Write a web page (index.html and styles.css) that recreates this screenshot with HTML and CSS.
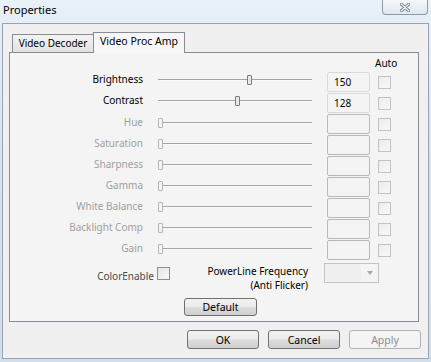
FILE: index.html
```html
<!DOCTYPE html>
<html lang="en">
<head>
    <meta charset="UTF-8">
    <title>Properties</title>
    <link rel="stylesheet" href="styles.css">
</head>
<body>
    <div class="window">
        <div class="titlebar">
            <div class="title">Properties</div>
            <div class="close">
                <svg width="10" height="9" viewBox="0 0 10 9">
                    <path d="M1 1 L9 8 M9 1 L1 8" stroke="#6f7b88" stroke-width="3" stroke-linecap="round"/>
                    <path d="M1 1 L9 8 M9 1 L1 8" stroke="#f4f7fa" stroke-width="1.2" stroke-linecap="round"/>
                </svg>
            </div>
        </div>

        <div class="client">
            <div class="tabstrip">
                <div class="tab">Video Decoder</div>
                <div class="tab active">Video Proc Amp</div>
            </div>

            <div class="panel">
                <div class="auto-head">Auto</div>

                <div class="rows">
                    <div class="label">Brightness</div>
                    <div class="slider"><div class="track"></div><div class="thumb" style="left: 58%"></div></div>
                    <div class="box value">150</div>
                    <div class="check"></div>

                    <div class="label">Contrast</div>
                    <div class="slider"><div class="track"></div><div class="thumb" style="left: 50%"></div></div>
                    <div class="box value">128</div>
                    <div class="check"></div>

                    <div class="label off">Hue</div>
                    <div class="slider off"><div class="track"></div><div class="thumb"></div></div>
                    <div class="box"></div>
                    <div class="check"></div>

                    <div class="label off">Saturation</div>
                    <div class="slider off"><div class="track"></div><div class="thumb"></div></div>
                    <div class="box"></div>
                    <div class="check"></div>

                    <div class="label off">Sharpness</div>
                    <div class="slider off"><div class="track"></div><div class="thumb"></div></div>
                    <div class="box"></div>
                    <div class="check"></div>

                    <div class="label off">Gamma</div>
                    <div class="slider off"><div class="track"></div><div class="thumb"></div></div>
                    <div class="box"></div>
                    <div class="check"></div>

                    <div class="label off">White Balance</div>
                    <div class="slider off"><div class="track"></div><div class="thumb"></div></div>
                    <div class="box"></div>
                    <div class="check"></div>

                    <div class="label off">Backlight Comp</div>
                    <div class="slider off"><div class="track"></div><div class="thumb"></div></div>
                    <div class="box"></div>
                    <div class="check"></div>

                    <div class="label off">Gain</div>
                    <div class="slider off"><div class="track"></div><div class="thumb"></div></div>
                    <div class="box"></div>
                    <div class="check"></div>
                </div>

                <div class="extra">
                    <div class="color-label">ColorEnable</div>
                    <div class="check enabled"></div>
                    <div class="power-label">PowerLine Frequency<br>(Anti Flicker)</div>
                    <div class="combo"><div class="combo-field"></div><div class="combo-arrow"></div></div>
                </div>

                <div class="default-row">
                    <button class="btn">Default</button>
                </div>
            </div>

            <div class="buttons">
                <button class="btn">OK</button>
                <button class="btn">Cancel</button>
                <button class="btn disabled">Apply</button>
            </div>
        </div>
    </div>
</body>
</html>
```

FILE: styles.css
```css
body {
    margin: 0;
    padding: 0;
    font-family: "Noto Sans", "Liberation Sans", sans-serif;
    font-size: 10px;
    color: #000;
}

.window {
    width: 431px;
    height: 362px;
    background: linear-gradient(180deg, #e8f0f8 0%, #d6e4f1 40%, #cfdfee 100%);
    overflow: hidden;
}

.titlebar {
    height: 23px;
    display: flex;
    justify-content: space-between;
    align-items: flex-start;
}

.title {
    font-size: 11px;
    line-height: 20px;
    padding-left: 3px;
}

.close {
    width: 44px;
    height: 14px;
    margin-right: 3px;
    border: 1px solid #8d9aab;
    border-top: none;
    border-radius: 0 0 4px 4px;
    background: linear-gradient(180deg, #f4f7fa, #dfe7ef);
    display: flex;
    justify-content: center;
    align-items: center;
}

.client {
    margin: 0 2px;
    height: 334px;
    background-color: #f0f0f0;
    border: 1px solid #9aa4b0;
}

/* tabs */
.tabstrip {
    display: flex;
    align-items: flex-end;
    height: 20px;
    margin-top: 8px;
    padding-left: 9px;
}

.tab {
    width: 80px;
    height: 17px;
    line-height: 17px;
    text-align: center;
    border: 1px solid #898c95;
    border-bottom: none;
    background: linear-gradient(180deg, #f3f3f3, #e2e2e2);
}

.tab.active {
    width: 90px;
    height: 20px;
    line-height: 17px;
    border-left: 1px solid #898c95;
    margin-left: -1px;
    margin-bottom: -1px;
    background: #f7f7f7;
    font-size: 10.5px;
    position: relative;
}

.panel {
    margin-left: 6px;
    width: 408px;
    height: 268px;
    border: 1px solid #898c95;
    background-color: #f4f4f4;
}

.auto-head {
    height: 16px;
    line-height: 14px;
    padding-top: 3px;
    padding-left: 365px;
}

.rows {
    display: grid;
    grid-template-columns: 133px 154px 43px 13px;
    column-gap: 15px;
    grid-auto-rows: 20px;
    row-gap: 1px;
}

.rows .check {
    margin-left: -7px;
}

.label {
    text-align: right;
    line-height: 14px;
}

.label.off {
    color: #a0a0a0;
    line-height: 16px;
}

.slider {
    position: relative;
    height: 16px;
}

.track {
    margin-top: 7px;
    height: 0;
    border-top: 1px solid #a5a5a5;
    border-bottom: 1px solid #f9f9f9;
}

.slider.off .track {
    margin-top: 8px;
}

.thumb {
    position: absolute;
    top: 3px;
    left: 0;
    width: 3px;
    height: 8px;
    border: 1px solid #7b7b7b;
    border-radius: 1px;
    background: #e8e8e8;
}

.slider.off .thumb {
    top: 4px;
    border-color: #b5b5b5;
    background: #f4f4f4;
}

.box {
    height: 18px;
    border: 1px solid #b9b9b9;
    border-radius: 2px;
    background: #f4f4f4;
}

.box.value {
    border-color: #dadada;
    line-height: 18px;
    padding-left: 6px;
}

.check {
    width: 11px;
    height: 11px;
    align-self: center;
    border: 1px solid #c2c2c2;
    background: linear-gradient(135deg, #ececec, #f8f8f8);
}

.check.enabled {
    border-color: #8f8f8f;
    background: linear-gradient(135deg, #e4e4e4, #fafafa);
}

/* color enable / powerline row */
.extra {
    display: flex;
    align-items: center;
    height: 30px;
    margin-top: 3px;
}

.color-label {
    width: 144px;
    text-align: right;
    color: #4a4a4a;
    margin-right: 3px;
    margin-top: -5px;
}

.extra .check {
    align-self: flex-start;
    margin-top: 4px;
}

.power-label {
    width: 138px;
    text-align: right;
    line-height: 14px;
}

.combo {
    display: flex;
    width: 53px;
    height: 18px;
    margin-left: 16px;
    margin-top: -10px;
    border: 1px solid #c4c4c4;
    background: #f4f4f4;
}

.combo-field {
    width: 36px;
    background: #f0f0f0;
}

.combo-arrow {
    flex: 1;
    position: relative;
}

.combo-arrow::after {
    content: "";
    position: absolute;
    left: 6px;
    top: 7px;
    border-left: 3px solid transparent;
    border-right: 3px solid transparent;
    border-top: 4px solid #a8a8a8;
}

.default-row {
    padding-left: 174px;
    margin-top: 5px;
}

/* buttons */
.btn {
    width: 73px;
    height: 18px;
    padding: 0;
    font-family: "Noto Sans", "Liberation Sans", sans-serif;
    font-size: 10.5px;
    color: #000;
    border: 1px solid #707070;
    border-radius: 3px;
    background: linear-gradient(180deg, #f2f2f2 0%, #ebebeb 48%, #dddddd 52%, #cfcfcf 100%);
}

.btn.disabled {
    color: #8c8c8c;
    border-color: #adb2b5;
    background: #f4f4f4;
}

.buttons {
    display: flex;
    justify-content: flex-end;
    gap: 9px;
    padding-right: 7px;
    margin-top: 8px;
}

.buttons .btn {
    width: 72px;
    height: 19px;
}
```
